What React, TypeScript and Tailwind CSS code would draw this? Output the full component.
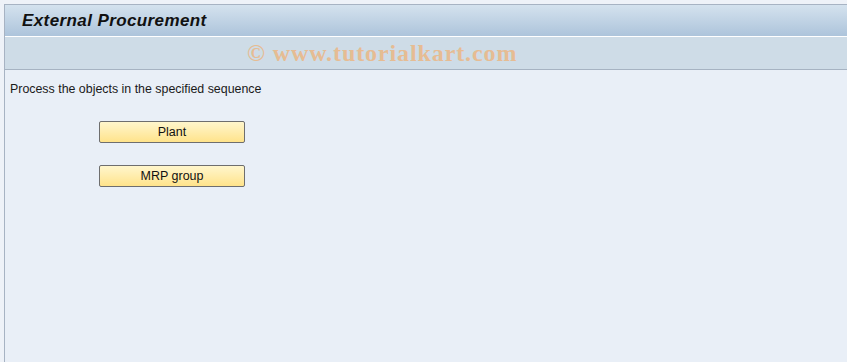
export default function App() {
  const buttons = ["Plant", "MRP group"];

  return (
    <div className="w-[847px] h-[362px] bg-[#eef2f8] pt-[4px] pl-[4px] flex flex-col overflow-hidden" style={{ fontFamily: '"Liberation Sans", Arial, sans-serif' }}>
      <div className="flex-1 flex flex-col border-l border-t border-[#a7b3c3] bg-[#e9eff7]">
        {/* Title bar */}
        <div className="h-[32px] bg-gradient-to-b from-[#d4e2ee] to-[#adc4db] border-b border-white flex items-center pl-[17px]">
          <h1 className="text-[17px] font-bold italic text-[#111] tracking-[0.4px]">External Procurement</h1>
        </div>

        {/* Toolbar with watermark */}
        <div className="h-[33px] bg-[#cedce7] border-b border-[#a6b3c2] flex items-center pl-[242px]">
          <span className="text-[24px] font-bold text-[#e9b98b] opacity-90 tracking-[0.9px]" style={{ fontFamily: '"Liberation Serif", "Times New Roman", serif' }}>
            © www.tutorialkart.com
          </span>
        </div>

        {/* Content */}
        <div className="flex-1 pl-[5px] pt-[12px]">
          <p className="text-[12.4px] text-[#1a1a1a] leading-[15px]">Process the objects in the specified sequence</p>
          <div className="flex flex-col gap-[22px] mt-[24px] ml-[89px]">
            {buttons.map(b => (
              <button
                key={b}
                className="w-[146px] h-[22px] rounded-[2px] border border-[#6e6e6e] bg-gradient-to-b from-[#fff6cc] to-[#ffe38a] text-[12.5px] text-[#111] flex items-center justify-center"
              >
                {b}
              </button>
            ))}
          </div>
        </div>
      </div>
    </div>
  );
}
